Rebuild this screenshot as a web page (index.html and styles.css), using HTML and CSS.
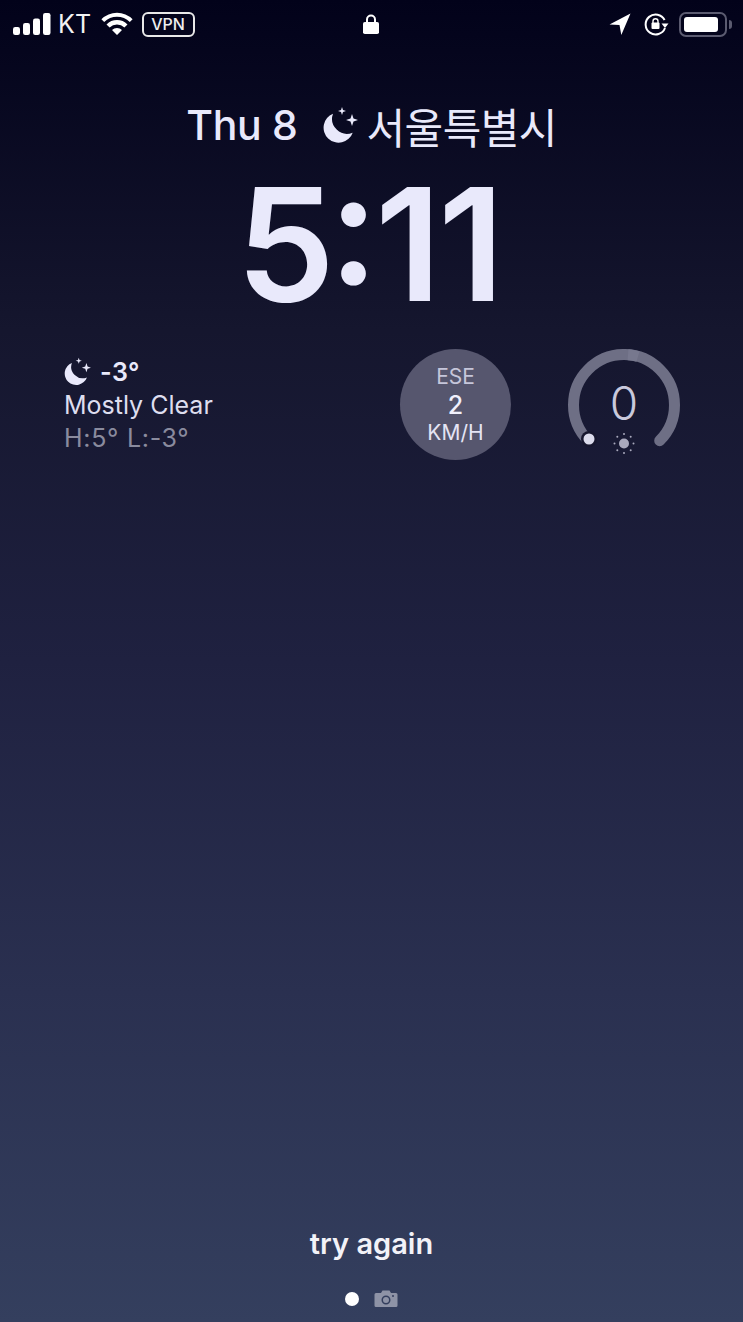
FILE: index.html
```html
<!DOCTYPE html>
<html lang="ko">
<head>
<meta charset="utf-8">
<title>Lock Screen</title>
<link rel="stylesheet" href="styles.css">
</head>
<body>
<main class="screen">
  <header class="status">
    <div class="status-side">
      <svg class="signal" width="38" height="24" viewBox="0 0 38 24"><rect x="0" y="15" width="7" height="8" rx="2.200"/><rect x="10" y="11" width="7" height="12" rx="2.200"/><rect x="20" y="6.500" width="7" height="16.500" rx="2.200"/><rect x="30" y="1" width="7.500" height="22" rx="2.200"/></svg>
      <span class="carrier">KT</span>
      <svg class="wifi" width="32" height="24" viewBox="0 0 32 24"><path d="M16 23l-5-5a7 7 0 0 1 10 0zM8.600 15.500L5.500 12.400a15 15 0 0 1 21 0l-3.100 3.100a10.600 10.600 0 0 0-14.800 0zM3.200 10L.4 7.200a22.200 22.200 0 0 1 31.200 0L28.800 10a18.200 18.200 0 0 0-25.600 0z"/></svg>
      <span class="vpn">VPN</span>
    </div>
    <svg class="lock" width="18" height="22" viewBox="0 0 18 22"><path d="M5 10V6.600a4 4 0 0 1 8 0V10" fill="none" stroke="#fff" stroke-width="2"/><rect x="1" y="9" width="16" height="12" rx="1.800"/></svg>
    <div class="status-side status-right">
      <svg class="arrow" width="22" height="22" viewBox="0 0 22 22"><path d="M21.500 .5L.5 11.600l10 .4 1.800 10z"/></svg>
      <svg class="rotation" width="26" height="24" viewBox="0 0 26 24"><path d="M20.600 8A10 10 0 1 0 21 16" fill="none" stroke="#fff" stroke-width="2"/><path d="M17.500 11.500h7L21 16z"/><path d="M9 11V9.200a2.500 2.500 0 0 1 5 0V11" fill="none" stroke="#fff" stroke-width="1.400"/><rect x="7.500" y="10.500" width="8" height="6.500" rx="1"/></svg>
      <div class="battery"><div class="battery-fill"></div></div>
      <div class="battery-cap"></div>
    </div>
  </header>

  <section class="date-row">
    <span>Thu 8</span>
    <svg class="moon moon-date" viewBox="0 0 36 38"><use href="#moon-stars"/></svg>
    <span class="city">서울특별시</span>
  </section>

  <div class="clock"><span class="clock-hour">5</span>:11</div>

  <section class="widgets">
    <div class="weather">
      <div class="weather-top">
        <svg class="moon moon-small" viewBox="0 0 36 38"><use href="#moon-stars"/></svg>
        <span class="temp">-3°</span>
      </div>
      <div class="weather-desc">Mostly Clear</div>
      <div class="weather-range">H:5° L:-3°</div>
    </div>
    <div class="wind">
      <span class="wind-dir">ESE</span>
      <span class="wind-speed">2</span>
      <span class="wind-unit">KM/H</span>
    </div>
    <div class="uv">
      <svg class="uv-gauge" width="112" height="112" viewBox="0 0 112 112">
        <path d="M20.300 91.700A50.500 50.500 0 1 1 91.700 91.700" fill="none" stroke="#6e6f85" stroke-width="11" stroke-linecap="round"/>
        <path d="M60 5.700A50.500 50.500 0 0 1 70 7.500" fill="none" stroke="#77788e" stroke-width="11"/>
        <circle cx="21" cy="90" r="8" fill="#17172e"/>
        <circle cx="21" cy="90" r="5.500" fill="#dcdcec"/>
        <circle cx="56" cy="94.500" r="5" fill="#a9a9bd"/>
        <g fill="#a9a9bd"><circle cx="56" cy="85" r="1"/><circle cx="56" cy="104" r="1"/><circle cx="46.500" cy="94.500" r="1"/><circle cx="65.500" cy="94.500" r="1"/><circle cx="49.300" cy="87.800" r="1"/><circle cx="62.700" cy="87.800" r="1"/><circle cx="49.300" cy="101.200" r="1"/><circle cx="62.700" cy="101.200" r="1"/></g>
      </svg>
      <span class="uv-value">0</span>
    </div>
  </section>

  <footer class="footer">
    <div class="try-again">try again</div>
    <div class="pager">
      <span class="dot"></span>
      <svg class="camera" width="24" height="18" viewBox="0 0 24 18"><path fill-rule="evenodd" d="M2 3h5l1.500-2.500h7L17 3h5a1.500 1.500 0 0 1 1.500 1.500v11A1.500 1.500 0 0 1 22 17H2a1.500 1.500 0 0 1-1.500-1.500v-11A1.500 1.500 0 0 1 2 3zm10 2.500a4.500 4.500 0 1 0 0 9 4.500 4.500 0 0 0 0-9zm0 1.500a3 3 0 1 1 0 6 3 3 0 0 1 0-6z"/><circle cx="19" cy="6" r="1" fill="#333d5c"/></svg>
    </div>
  </footer>
</main>
<svg class="defs" width="0" height="0">
  <defs>
    <g id="moon-stars">
      <path d="M10 7.700A15 15 0 1 0 29.700 26.700 15 15 0 0 1 10 7.700z"/>
      <path d="M29 8l1.500 4.500L35 14l-4.500 1.500L29 20l-1.500-4.500L23 14l4.500-1.500z"/>
      <path d="M19 1l1 3 3 1-3 1-1 3-1-3-3-1 3-1z"/>
    </g>
  </defs>
</svg>
</body>
</html>
```
FILE: styles.css
```css
* { box-sizing: border-box; }
html, body { margin: 0; height: 100%; }
body { font-family: Inter, "Noto Sans CJK KR", sans-serif; }
.screen {
  width: 743px;
  height: 1322px;
  overflow: hidden;
  display: flex;
  flex-direction: column;
  color: #e9e9fb;
  background: linear-gradient(180deg, #02021a 0%, #15162e 25%, #1f2140 50%, #2a3050 75%, #343f5e 100%);
}
.status {
  display: grid;
  grid-template-columns: 1fr auto 1fr;
  align-items: center;
  height: 50px;
  padding: 0 11px 2px 13px;
  color: #fff;
  fill: #fff;
}
.status-side { display: flex; align-items: center; }
.status-right { justify-content: flex-end; }
.carrier { font-size: 25px; font-weight: 400; margin-left: 7px; letter-spacing: 0.3px; color: #f2f2f2; }
.wifi { margin-left: 9px; }
.vpn {
  margin-left: 9px;
  width: 53px;
  height: 25px;
  border: 2px solid #e8e8e8;
  border-radius: 6px;
  font-size: 16px;
  font-weight: 500;
  line-height: 21px;
  text-align: center;
  color: #eee;
}
.lock { display: block; margin-right: 3px; }
.arrow { margin-right: 13px; }
.rotation { margin-right: 9px; }
.battery {
  width: 48px;
  height: 25px;
  padding: 3px;
  border: 2px solid #5b5b70;
  border-radius: 7px;
}
.battery-fill { width: 34px; height: 15px; background: #fff; border-radius: 3px; }
.battery-cap { width: 3px; height: 9px; margin-left: 2px; background: #5b5b70; border-radius: 0 3px 3px 0; }

.date-row {
  display: flex;
  align-items: center;
  justify-content: center;
  height: 48px;
  margin-top: 51px;
  font-size: 41px;
  font-weight: 500;
  letter-spacing: -0.3px;
}
.defs { position: absolute; }
.moon { fill: #e9e9fb; display: block; }
.moon-date { width: 36px; height: 38px; margin: 0 8px 0 25px; }
.city { font-size: 42px; font-weight: 400; letter-spacing: -0.6px; }
.clock {
  font-size: 157px;
  font-weight: 600;
  line-height: 150px;
  letter-spacing: -3.500px;
  text-align: center;
  margin-top: 20px;
  padding-right: 6px;
  font-feature-settings: "case" 1;
}
.clock-hour { margin-right: -3px; }
.widgets {
  display: flex;
  align-items: flex-start;
  padding: 0 63px 0 64px;
  margin-top: 30px;
}
.weather { width: 336px; font-size: 25px; line-height: 33px; padding-top: 7px; }
.weather-top { display: flex; align-items: center; font-weight: 500; gap: 8px; }
.temp { font-weight: 600; letter-spacing: 0.5px; }
.moon-small { width: 28px; height: 29px; margin-top: -3px; }
.weather-desc { color: #dedeef; }
.weather-range { color: #8a8b9e; letter-spacing: 0.7px; }
.wind {
  width: 111px;
  height: 111px;
  border-radius: 50%;
  background: #56566e;
  display: flex;
  flex-direction: column;
  align-items: center;
  justify-content: center;
}
.wind-dir { font-size: 21px; line-height: 28px; color: #c6c6da; }
.wind-speed { font-size: 25px; line-height: 28px; font-weight: 500; color: #f0f0fc; }
.wind-unit { font-size: 21px; line-height: 28px; color: #e4e4f4; }
.uv { position: relative; width: 112px; height: 111px; margin-left: 57px; }
.uv-gauge { display: block; }
.uv-value {
  position: absolute;
  left: 0;
  right: 0;
  top: 26px;
  text-align: center;
  font-size: 46px;
  font-weight: 300;
  line-height: 56px;
  color: #c9c9dc;
}
.footer {
  margin-top: auto;
  display: flex;
  flex-direction: column;
  align-items: center;
  padding-bottom: 13px;
}
.try-again { font-size: 29px; font-weight: 600; line-height: 36px; color: #f2f2f8; margin-bottom: 18px; }
.pager { display: flex; align-items: center; gap: 15px; margin-top: 9px; height: 20px; }
.dot { width: 14px; height: 14px; border-radius: 50%; background: #fff; }
.camera { fill: #8e93a6; }
```
